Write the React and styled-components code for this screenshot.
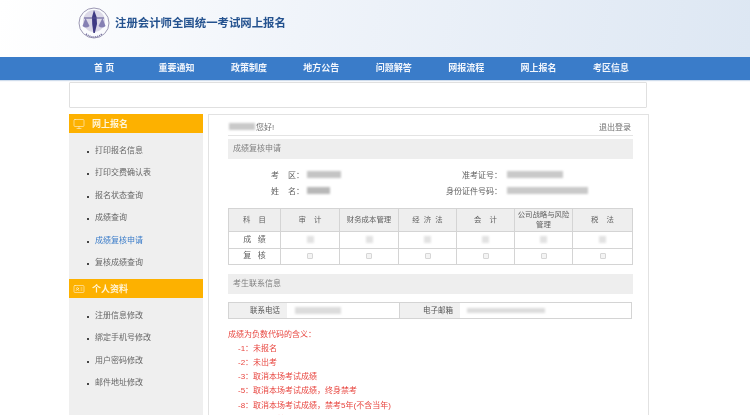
import styled, { createGlobalStyle } from 'styled-components';
import { Monitor, IdCard } from 'lucide-react';

const FONT = '"Liberation Sans", "Noto Sans CJK SC", sans-serif';

const GlobalStyle = createGlobalStyle`
	html, body {
		margin: 0;
		padding: 0;
		height: 415px;
		overflow: hidden;
		background: #fff;
		font-family: ${FONT};
	}
`;

const Page = styled.div`
	width: 750px;
	height: 415px;
	overflow: hidden;
	filter: blur(0.5px);
`;

const Banner = styled.header`
	height: 57px;
	box-sizing: border-box;
	padding: 7px 0 0 78px;
	display: flex;
	align-items: flex-start;
	gap: 4px;
	background: linear-gradient(100deg, #ffffff 0%, #f0f4fa 40%, #dde7f3 100%);
`;

const SiteTitle = styled.h1`
	margin: 9px 0 0;
	font-size: 11.4px;
	line-height: 15px;
	font-weight: 700;
	color: #24528f;
`;

const Nav = styled.nav`
	height: 23px;
	padding-left: 68px;
	display: grid;
	grid-template-columns: repeat(8, 72.4px);
	background: #3a7cc9;
	box-shadow: 0 1px 1px #cfdcec;
`;

const NavItem = styled.a`
	font-family: "Liberation Serif", "Noto Sans CJK SC", serif;
	font-size: 9px;
	font-weight: 700;
	line-height: 23px;
	text-align: center;
	color: #f2f6fc;
`;

const Notice = styled.div`
	box-sizing: border-box;
	width: 578px;
	height: 26px;
	margin: 2px 0 6px 69px;
	background: #fff;
	border: 1px solid #e0e0e0;
	border-radius: 1px;
`;

const Columns = styled.div`
	display: flex;
	gap: 5px;
	margin-left: 69px;
	width: 578px;
	height: 301px;
`;

const Sidebar = styled.aside`
	width: 134px;
	flex: none;
	background: #efefef;
`;

const SideHead = styled.div`
	height: 19px;
	padding-left: 4px;
	display: flex;
	align-items: center;
	gap: 7px;
	background: #fdb100;
	color: #fff4d6;
	font-size: 9px;
	font-weight: 700;
`;

const SideList = styled.ul`
	list-style: none;
	margin: 0;
	padding: 7px 0 4.6px 26px;
`;

const SideItem = styled.li`
	position: relative;
	font-size: 8px;
	line-height: 22.4px;
	color: ${({ $active }) => ($active ? '#3a7cc9' : '#666')};

	&::before {
		content: '';
		position: absolute;
		left: -8px;
		top: 11px;
		width: 2px;
		height: 2px;
		background: #444;
	}
`;

const Panel = styled.main`
	flex: 1;
	box-sizing: border-box;
	padding: 0 15px 0 19px;
	border: 1px solid #e2e2e2;
	border-bottom: none;
	font-size: 8px;
	color: #707070;
`;

const TopBar = styled.div`
	height: 21px;
	display: flex;
	align-items: center;
	justify-content: space-between;
	padding: 3px 2px 0 1px;
	box-sizing: border-box;
	border-bottom: 1px solid #e4e4e4;
`;

const Greeting = styled.span`
	display: flex;
	align-items: center;
	gap: 1px;
`;

const Redacted = styled.span`
	display: inline-block;
	width: ${({ $w }) => $w}px;
	height: ${({ $h }) => $h || 7}px;
	background: ${({ $c }) => $c || '#c9c9c9'};
	filter: blur(1.3px);
`;

const SectionHead = styled.div`
	height: 19.5px;
	margin-top: 3px;
	padding-left: 5px;
	line-height: 19.5px;
	background: #eeeeee;
	color: #808080;
`;

const InfoGrid = styled.div`
	display: grid;
	grid-template-columns: 74px 126px 62px 1fr;
	column-gap: 5px;
	grid-auto-rows: 16px;
	align-items: center;
	padding-top: 7.5px;
	height: 49.5px;
	box-sizing: border-box;
`;

const InfoLabel = styled.span`
	margin-right: -2px;
	text-align: right;
	white-space: pre;
	color: #606060;
`;

const InfoValue = styled.span`
	display: flex;
	align-items: center;
	padding-left: ${({ $pad }) => $pad || 0}px;
`;

const ScoreTable = styled.table`
	width: 404px;
	table-layout: fixed;
	border-collapse: collapse;
	color: #606060;
`;

const HeadCell = styled.th`
	height: 22px;
	padding: 0;
	font-size: 7.4px;
	font-weight: 400;
	line-height: 10px;
	text-align: center;
	white-space: pre-wrap;
	background: #eeeeee;
	border: 1px solid #d4d4d4;
`;

const Cell = styled.td`
	height: 15.5px;
	padding: 0;
	text-align: center;
	white-space: pre;
	background: #fff;
	border: 1px solid #d4d4d4;
	font-size: ${({ $label }) => ($label ? 8 : 0)}px;
	line-height: ${({ $label }) => ($label ? '10px' : 0)};
`;

const Check = styled.span`
	display: inline-block;
	box-sizing: border-box;
	width: 6px;
	height: 6px;
	border: 1px solid #d6d6d6;
	border-radius: 1px;
	background: #f4f4f4;
`;

const ContactHead = styled(SectionHead)`
	margin-top: 9px;
`;

const ContactRow = styled.div`
	display: grid;
	grid-template-columns: 58px 112px 61px 1fr;
	height: 15px;
	margin-top: 8px;
	border: 1px solid #d4d4d4;
	width: 402px;
`;

const ContactLabel = styled.div`
	padding-right: 7px;
	font-size: 7.5px;
	line-height: 15px;
	text-align: right;
	background: #f0f0f0;
	color: #555;
	border-left: ${({ $divided }) => ($divided ? '1px solid #d4d4d4' : 'none')};
`;

const ContactValue = styled.div`
	display: flex;
	align-items: center;
	padding-left: ${({ $pad }) => $pad}px;
`;

const Notes = styled.div`
	margin-top: 9px;
	color: #e8453f;
	line-height: 14.2px;
`;

const NoteLine = styled.div`
	padding-left: ${({ $indent }) => ($indent ? 10 : 0)}px;
	white-space: pre;
`;

function Logo() {
	return (
		<svg width="33" height="33" viewBox="0 0 33 33" fill="none">
			<circle cx="16" cy="16" r="15" stroke="#9d99b4" strokeWidth="1" />
			<circle cx="16" cy="14" r="11" fill="#dcd9e8" />
			<path d="M16 3 L18.6 10 L19 17 L16.8 26 L15.4 26 L14.2 17 L14 10 Z" fill="#3f3a83" />
			<path d="M6 11 H26" stroke="#57518f" strokeWidth="1" />
			<path d="M7.5 11 L4.5 19 Q8 22 11.5 19 Z M24.5 11 L20.5 19 Q24 22 27.5 19 Z" fill="#8580b3" />
			<path d="M8 27 Q16 33 24 27" stroke="#6d6799" strokeWidth="1.6" strokeDasharray="1 1" />
		</svg>
	);
}

const NAV_ITEMS = ['首 页', '重要通知', '政策制度', '地方公告', '问题解答', '网报流程', '网上报名', '考区信息'];
const EXAM_ITEMS = ['打印报名信息', '打印交费确认表', '报名状态查询', '成绩查询', '成绩复核申请', '复核成绩查询'];
const PROFILE_ITEMS = ['注册信息修改', '绑定手机号修改', '用户密码修改', '邮件地址修改'];
const SUBJECTS = ['审    计', '财务成本管理', '经  济  法', '会    计', '公司战略与风险 管理', '税    法'];
const COL_WIDTHS = [52, 59, 59, 58, 58, 58, 60];
const NOTES = ['-1：未报名', '-2：未出考', '-3：取消本场考试成绩', '-5：取消本场考试成绩，终身禁考', '-8：取消本场考试成绩，禁考5年(不含当年)', '-9：成绩无效'];

export default function App() {
	return (
		<Page>
			<GlobalStyle />
			<Banner>
				<Logo />
				<SiteTitle>注册会计师全国统一考试网上报名</SiteTitle>
			</Banner>
			<Nav>
				{NAV_ITEMS.map((item) => <NavItem key={item}>{item}</NavItem>)}
			</Nav>
			<Notice />
			<Columns>
				<Sidebar>
					<SideHead><Monitor size={12} strokeWidth={1.2} />网上报名</SideHead>
					<SideList>
						{EXAM_ITEMS.map((item) => (
							<SideItem key={item} $active={item === '成绩复核申请'}>{item}</SideItem>
						))}
					</SideList>
					<SideHead><IdCard size={12} strokeWidth={1.2} />个人资料</SideHead>
					<SideList>
						{PROFILE_ITEMS.map((item) => <SideItem key={item}>{item}</SideItem>)}
					</SideList>
				</Sidebar>
				<Panel>
					<TopBar>
						<Greeting><Redacted $w={26} />您好!</Greeting>
						<span>退出登录</span>
					</TopBar>
					<SectionHead>成绩复核申请</SectionHead>
					<InfoGrid>
						<InfoLabel>考    区：</InfoLabel>
						<InfoValue><Redacted $w={34} $c="#c4c4c4" /></InfoValue>
						<InfoLabel>准考证号：</InfoLabel>
						<InfoValue $pad={2}><Redacted $w={56} /></InfoValue>
						<InfoLabel>姓    名：</InfoLabel>
						<InfoValue><Redacted $w={23} $c="#b8b8b8" /></InfoValue>
						<InfoLabel>身份证件号码：</InfoLabel>
						<InfoValue $pad={2}><Redacted $w={81} /></InfoValue>
					</InfoGrid>
					<ScoreTable>
						<colgroup>
							{COL_WIDTHS.map((w, i) => <col key={i} width={w} />)}
						</colgroup>
						<thead>
							<tr>
								<HeadCell>科    目</HeadCell>
								{SUBJECTS.map((s) => <HeadCell key={s}>{s}</HeadCell>)}
							</tr>
						</thead>
						<tbody>
							<tr>
								<Cell $label>成   绩</Cell>
								{SUBJECTS.map((s) => <Cell key={s}><Redacted $w={7} $h={7} $c="#e2e2e2" /></Cell>)}
							</tr>
							<tr>
								<Cell $label>复   核</Cell>
								{SUBJECTS.map((s) => <Cell key={s}><Check /></Cell>)}
							</tr>
						</tbody>
					</ScoreTable>
					<ContactHead>考生联系信息</ContactHead>
					<ContactRow>
						<ContactLabel>联系电话</ContactLabel>
						<ContactValue $pad={8}><Redacted $w={46} $c="#dcdcdc" /></ContactValue>
						<ContactLabel $divided>电子邮箱</ContactLabel>
						<ContactValue $pad={7}><Redacted $w={78} $h={5} $c="#dcdcdc" /></ContactValue>
					</ContactRow>
					<Notes>
						<NoteLine>成绩为负数代码的含义：</NoteLine>
						{NOTES.map((n) => <NoteLine key={n} $indent>{n}</NoteLine>)}
					</Notes>
				</Panel>
			</Columns>
		</Page>
	);
}
